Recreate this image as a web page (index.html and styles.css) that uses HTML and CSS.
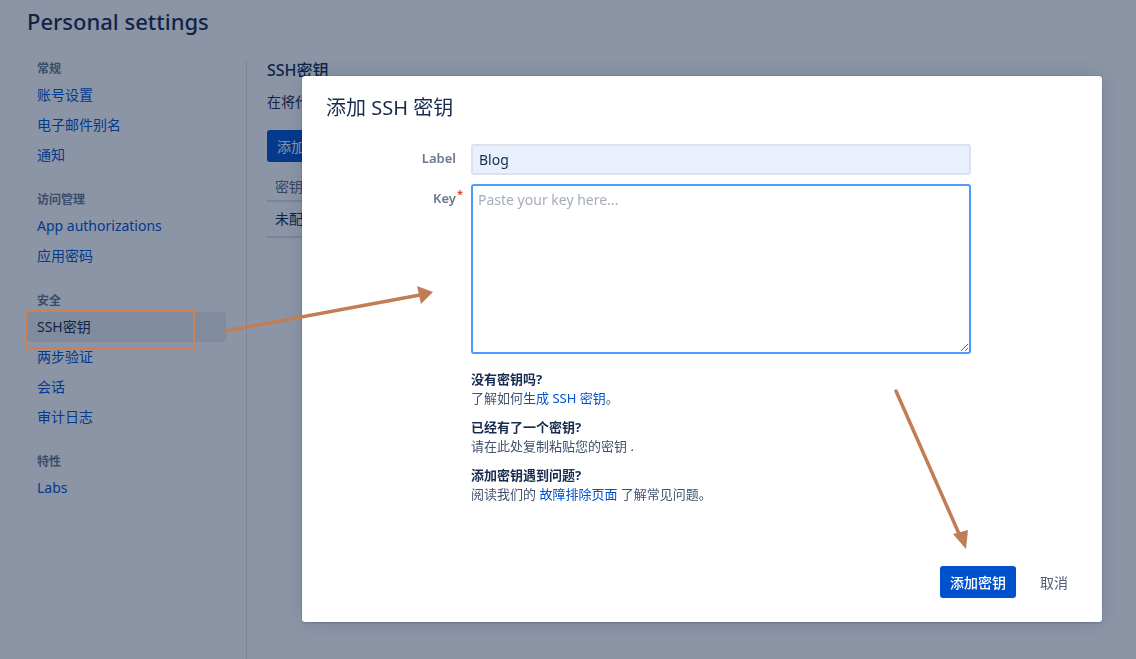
FILE: index.html
```html
<!DOCTYPE html>
<html lang="zh-CN">
<head>
<meta charset="utf-8">
<title>Personal settings</title>
<link rel="stylesheet" href="styles.css">
</head>
<body>
<div class="page">
  <h1 class="title">Personal settings</h1>
  <div class="layout">
    <nav class="sidebar">
      <div class="group">
        <div class="group-title">常规</div>
        <a class="nav-item">账号设置</a>
        <a class="nav-item">电子邮件别名</a>
        <a class="nav-item">通知</a>
      </div>
      <div class="group">
        <div class="group-title">访问管理</div>
        <a class="nav-item">App authorizations</a>
        <a class="nav-item">应用密码</a>
      </div>
      <div class="group">
        <div class="group-title">安全</div>
        <a class="nav-item selected">SSH密钥</a>
        <a class="nav-item">两步验证</a>
        <a class="nav-item">会话</a>
        <a class="nav-item">审计日志</a>
      </div>
      <div class="group">
        <div class="group-title">特性</div>
        <a class="nav-item">Labs</a>
      </div>
    </nav>
    <main class="main">
      <h2 class="main-title">SSH密钥</h2>
      <p class="main-desc">在将代码推送到 Bitbucket 之前，请使用 SSH 密钥进行身份验证。</p>
      <button class="primary-btn">添加密钥</button>
      <div class="table">
        <div class="table-row head">密钥</div>
        <div class="table-row">未配置任何密钥</div>
      </div>
    </main>
  </div>
</div>

<div class="blanket"></div>

<div class="modal">
  <h3 class="modal-title">添加 SSH 密钥</h3>
  <div class="form">
    <div class="form-row">
      <label class="form-label">Label</label>
      <input class="text-input" type="text" value="Blog">
    </div>
    <div class="form-row">
      <label class="form-label">Key<span class="req">*</span></label>
      <textarea class="key-input" placeholder="Paste your key here..."></textarea>
    </div>
    <div class="help">
      <div class="help-block">
        <div class="help-title">没有密钥吗?</div>
        <div class="help-text">了解如何<a class="link">生成 SSH 密钥</a>。</div>
      </div>
      <div class="help-block">
        <div class="help-title">已经有了一个密钥?</div>
        <div class="help-text">请在此处复制粘贴您的密钥 .</div>
      </div>
      <div class="help-block">
        <div class="help-title">添加密钥遇到问题?</div>
        <div class="help-text">阅读我们的 <a class="link">故障排除页面</a> 了解常见问题。</div>
      </div>
    </div>
  </div>
  <div class="modal-footer">
    <button class="submit-btn">添加密钥</button>
    <button class="cancel-btn">取消</button>
  </div>
</div>

<svg class="annotations" width="1136" height="659" viewBox="0 0 1136 659">
  <rect x="26" y="311" width="168" height="37" fill="none" stroke="#c98256" stroke-width="2"/>
  <line x1="226" y1="331" x2="420" y2="295" stroke="#c17d55" stroke-width="3.5" stroke-linecap="round"/>
  <polygon points="433,292 417,286 421,304" fill="#c17d55"/>
  <line x1="896" y1="391" x2="960" y2="536" stroke="#c17d55" stroke-width="3.5" stroke-linecap="round"/>
  <polygon points="966,549 953,534 968,530" fill="#c17d55"/>
</svg>
</body>
</html>
```

FILE: styles.css
```css
* { box-sizing: border-box; }

html, body {
  margin: 0;
  padding: 0;
  width: 1136px;
  height: 659px;
  overflow: hidden;
  background: #ffffff;
  font-family: "Noto Sans", "Noto Sans CJK SC", sans-serif;
  color: #172b4d;
}

.page {
  padding-left: 27px;
  height: 659px;
}

.title {
  margin: 0;
  padding-top: 5px;
  height: 58px;
  font-size: 22px;
  line-height: 32px;
  font-weight: 500;
  color: #172b4d;
}

.layout {
  display: flex;
  height: 601px;
}

.sidebar {
  width: 199px;
  margin-right: 20px;
  display: flex;
  flex-direction: column;
  gap: 19px;
}

.group {
  display: flex;
  flex-direction: column;
}

.group-title {
  height: 22px;
  line-height: 22px;
  padding-left: 10px;
  font-size: 12px;
  font-weight: 600;
  color: #6b778c;
}

.nav-item {
  height: 30px;
  line-height: 30px;
  padding-left: 10px;
  font-size: 14px;
  color: #0052cc;
  border-radius: 3px;
}

.nav-item.selected {
  background: #ebecf0;
  color: #172b4d;
}

.main {
  flex: 1;
  border-left: 1px solid #dfe1e6;
  padding-left: 20px;
  margin-top: 2px;
}

.main-title {
  margin: 0;
  height: 20px;
  line-height: 20px;
  font-size: 16px;
  font-weight: 500;
  color: #172b4d;
}

.main-desc {
  margin: 12px 0 0;
  width: 35px;
  overflow: hidden;
  font-size: 14px;
  line-height: 20px;
  white-space: nowrap;
  color: #172b4d;
}

.primary-btn {
  margin-top: 18px;
  height: 32px;
  padding: 0 10px;
  border: none;
  border-radius: 3px;
  background: #0052cc;
  color: #ffffff;
  font-family: inherit;
  font-size: 14px;
}

.table {
  margin-top: 10px;
  width: 400px;
}

.table-row {
  height: 36px;
  line-height: 34px;
  padding-left: 8px;
  font-size: 14px;
  color: #172b4d;
  border-bottom: 2px solid #dfe1e6;
}

.table-row.head {
  height: 30px;
  line-height: 30px;
  color: #5e6c84;
}

.blanket {
  position: fixed;
  inset: 0;
  background: rgba(9, 30, 66, 0.47);
}

.modal {
  position: fixed;
  left: 302px;
  top: 76px;
  width: 800px;
  height: 546px;
  background: #ffffff;
  border-radius: 3px;
  box-shadow: 0 0 0 1px rgba(9, 30, 66, 0.08), 0 2px 1px rgba(9, 30, 66, 0.08), 0 0 20px -6px rgba(9, 30, 66, 0.31);
  display: flex;
  flex-direction: column;
  padding: 20px 22px 24px 24px;
}

.modal-title {
  margin: 0;
  height: 24px;
  font-size: 20px;
  line-height: 24px;
  font-weight: 400;
  color: #172b4d;
}

.form {
  margin-top: 24px;
  display: flex;
  flex-direction: column;
  gap: 9px;
}

.form-row {
  display: flex;
  gap: 15px;
}

.form-label {
  width: 130px;
  text-align: right;
  font-size: 13px;
  font-weight: 600;
  line-height: 28px;
  color: #6b778c;
}

.req {
  color: #de350b;
  font-size: 11px;
  line-height: 0;
  vertical-align: 5px;
  margin-left: 1px;
  margin-right: -7px;
}

.text-input {
  width: 500px;
  height: 31px;
  padding: 0 6px;
  border: 2px solid #dfe1e6;
  border-radius: 3px;
  background: #e8f0fe;
  font-family: inherit;
  font-size: 14px;
  color: #172b4d;
  outline: none;
}

.key-input {
  width: 500px;
  height: 170px;
  padding: 2px 5px;
  border: 2px solid #4c9aff;
  border-radius: 3px;
  background: #ffffff;
  font-family: inherit;
  font-size: 14px;
  line-height: 24px;
  color: #172b4d;
  outline: none;
  resize: vertical;
}

.key-input::placeholder {
  color: #a5adba;
}

.help {
  margin-left: 145px;
  margin-top: 7px;
  display: flex;
  flex-direction: column;
  gap: 10px;
}

.help-block {
  font-size: 13px;
  line-height: 19px;
}

.help-title {
  font-weight: 700;
  color: #172b4d;
}

.help-text {
  color: #42526e;
}

.link {
  color: #0052cc;
}

.modal-footer {
  margin-top: auto;
  display: flex;
  justify-content: flex-end;
  align-items: center;
  gap: 12px;
}

.submit-btn {
  height: 32px;
  width: 76px;
  border: none;
  border-radius: 3px;
  background: #0052cc;
  color: #ffffff;
  font-family: inherit;
  font-size: 14px;
  font-weight: 500;
}

.cancel-btn {
  height: 32px;
  padding: 0 12px;
  border: none;
  background: transparent;
  color: #505f79;
  font-family: inherit;
  font-size: 14px;
}

.annotations {
  position: fixed;
  left: 0;
  top: 0;
  pointer-events: none;
}
```
